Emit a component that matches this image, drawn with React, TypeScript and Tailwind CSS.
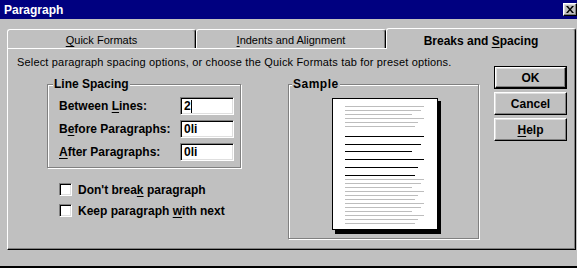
import React from "react";

const sunken =
  "border border-t-[#808080] border-l-[#808080] border-b-white border-r-white shadow-[inset_1px_1px_0_#000,inset_-1px_-1px_0_#dfdfdf]";
const raised =
  "border border-t-white border-l-white border-r-black border-b-black shadow-[inset_-1px_-1px_0_#808080,inset_1px_1px_0_#dfdfdf]";
const group = "relative border border-[#808080] shadow-[1px_1px_0_#fff,inset_1px_1px_0_#fff]";

function U({ children }: { children: React.ReactNode }) {
  return <span className="underline underline-offset-[2px] decoration-1">{children}</span>;
}

function Field({ label, value, caret }: { label: React.ReactNode; value: string; caret?: boolean }) {
  return (
    <div className="flex items-center h-[18px]">
      <div className="w-[121px] text-[12px] font-bold leading-[14px]">{label}</div>
      <div className={`w-[54px] h-[18px] bg-white ${sunken} flex items-center pl-[3px]`}>
        <span className="text-[12px] font-bold leading-[14px]">{value}</span>
        {caret && <span className="w-[1px] h-[13px] bg-black ml-[0px]" />}
      </div>
    </div>
  );
}

function Check({ children }: { children: React.ReactNode }) {
  return (
    <div className="flex items-center h-[13px]">
      <div className={`w-[13px] h-[13px] bg-white ${sunken}`} />
      <span className="ml-[6px] text-[12px] font-bold leading-[14px]">{children}</span>
    </div>
  );
}

function Page() {
  const gray1 = [
    [8, 92],
    [12, 89],
    [16, 80],
    [20, 92],
    [24, 86],
    [28, 83],
  ];
  const black = [
    [38, 92],
    [46, 89],
    [53, 80],
    [61, 92],
    [69, 86],
    [77, 83],
  ];
  const ends = [92, 89, 80, 92, 86, 83];
  const gray2 = Array.from({ length: 12 }, (_, i) => [81 + i * 4, ends[i % 6]]);
  return (
    <svg width="110" height="137" viewBox="0 0 110 137" className="block">
      <rect x="3" y="3" width="106" height="133" fill="#000" />
      <rect x="0.5" y="0.5" width="105" height="131" fill="#fff" stroke="#000" />
      {gray1.map(([y, e], i) => (
        <line key={"g1" + i} x1="13" x2={e} y1={y + 0.5} y2={y + 0.5} stroke="#bdbdbd" />
      ))}
      {black.map(([y, e], i) => (
        <line key={"b" + i} x1="13" x2={e} y1={y + 0.5} y2={y + 0.5} stroke="#000" />
      ))}
      {gray2.map(([y, e], i) => (
        <line key={"g2" + i} x1="13" x2={e} y1={y + 0.5} y2={y + 0.5} stroke="#bdbdbd" />
      ))}
    </svg>
  );
}

function Button({ children, def }: { children: React.ReactNode; def?: boolean }) {
  const inner = (
    <div
      className={`${raised} w-full h-full flex items-center justify-center text-[12px] font-bold leading-[14px] bg-[#c0c0c0]`}
    >
      {children}
    </div>
  );
  if (def) return <div className="w-[73px] h-[23px] border border-black">{inner}</div>;
  return <div className="w-[73px] h-[23px]">{inner}</div>;
}

export default function App() {
  return (
    <div className="w-[577px] h-[268px] bg-[#c0c0c0] flex flex-col overflow-hidden font-['Liberation_Sans',Arial,sans-serif] text-black select-none">
      {/* title bar */}
      <div className="h-[19px] bg-[#000080] flex items-center justify-between shrink-0">
        <span className="pl-[4px] text-[12px] font-bold text-white leading-[14px]">Paragraph</span>
        <div className={`w-[14px] h-[13px] bg-[#c0c0c0] ${raised} flex items-center justify-center`}>
          <svg width="8" height="7" viewBox="0 0 8 7">
            <path d="M0 0h2l2 2.5L6 0h2L5 3.5 8 7H6L4 4.5 2 7H0l3-3.5z" fill="#000" />
          </svg>
        </div>
      </div>

      {/* tabs */}
      <div className="mt-[9px] ml-[7px] flex items-end h-[20px] shrink-0">
        <div className="w-[189px] h-[19px] border-t border-l border-white border-r border-r-black rounded-tl-[3px] rounded-tr-[3px] shadow-[inset_-1px_0_0_#808080] flex justify-center pt-[4px] text-[11px] leading-[13px]">
          <span>
            <U>Q</U>uick Formats
          </span>
        </div>
        <div className="w-[190px] h-[19px] border-t border-l border-white border-r border-r-black rounded-tl-[3px] rounded-tr-[3px] shadow-[inset_-1px_0_0_#808080] flex justify-center pt-[4px] text-[11px] leading-[13px]">
          <span>
            <U>I</U>ndents and Alignment
          </span>
        </div>
        <div className="relative z-10 -mb-[1px] w-[190px] h-[21px] bg-[#c0c0c0] border-t border-l border-white border-r border-r-black rounded-tl-[3px] rounded-tr-[3px] shadow-[inset_-1px_0_0_#808080] flex justify-center pt-[5px] text-[12px] font-bold leading-[14px]">
          <span>
            Breaks and <U>S</U>pacing
          </span>
        </div>
      </div>

      {/* panel */}
      <div className="ml-[7px] w-[569px] h-[202px] shrink-0 border border-t-white border-l-white border-r-black border-b-black shadow-[inset_-1px_-1px_0_#808080] flex">
        <div className="flex-1 flex flex-col">
          <div className="pl-[9px] pt-[6px] h-[20px] text-[11px] leading-[14px] tracking-[0.17px] whitespace-nowrap">
            Select paragraph spacing options, or choose the Quick Formats tab for preset options.
          </div>
          <div className="mt-[15px] pl-[39px] flex items-start">
            <div className="flex flex-col">
              <div className={`${group} w-[194px] h-[84px] pl-[11px] pt-[12px] flex flex-col gap-[5px]`}>
                <span className="absolute -top-[8px] left-[5px] px-[1px] bg-[#c0c0c0] text-[12px] font-bold leading-[14px]">
                  Line Spacing
                </span>
                <Field
                  label={
                    <>
                      Between <U>L</U>ines:
                    </>
                  }
                  value="2"
                  caret
                />
                <Field
                  label={
                    <>
                      B<U>e</U>fore Paragraphs:
                    </>
                  }
                  value="0li"
                />
                <Field
                  label={
                    <>
                      <U>A</U>fter Paragraphs:
                    </>
                  }
                  value="0li"
                />
              </div>
              <div className="mt-[15px] pl-[12px] flex flex-col gap-[8px]">
                <Check>
                  Don't brea<U>k</U> paragraph
                </Check>
                <Check>
                  Keep paragraph <U>w</U>ith next
                </Check>
              </div>
            </div>
            <div className={`${group} ml-[47px] w-[191px] h-[155px] pl-[43px] pt-[13px]`}>
              <span className="absolute -top-[8px] left-[3px] px-[1px] bg-[#c0c0c0] text-[12px] font-bold leading-[14px] tracking-[0.5px]">
                Sample
              </span>
              <Page />
            </div>
          </div>
        </div>
        <div className="mt-[17px] mr-[8px] flex flex-col gap-[3px]">
          <Button def>OK</Button>
          <Button>Cancel</Button>
          <Button>
            <U>H</U>elp
          </Button>
        </div>
      </div>

      <div className="flex-1" />
      <div className="h-[2px] bg-black shrink-0" />
    </div>
  );
}
